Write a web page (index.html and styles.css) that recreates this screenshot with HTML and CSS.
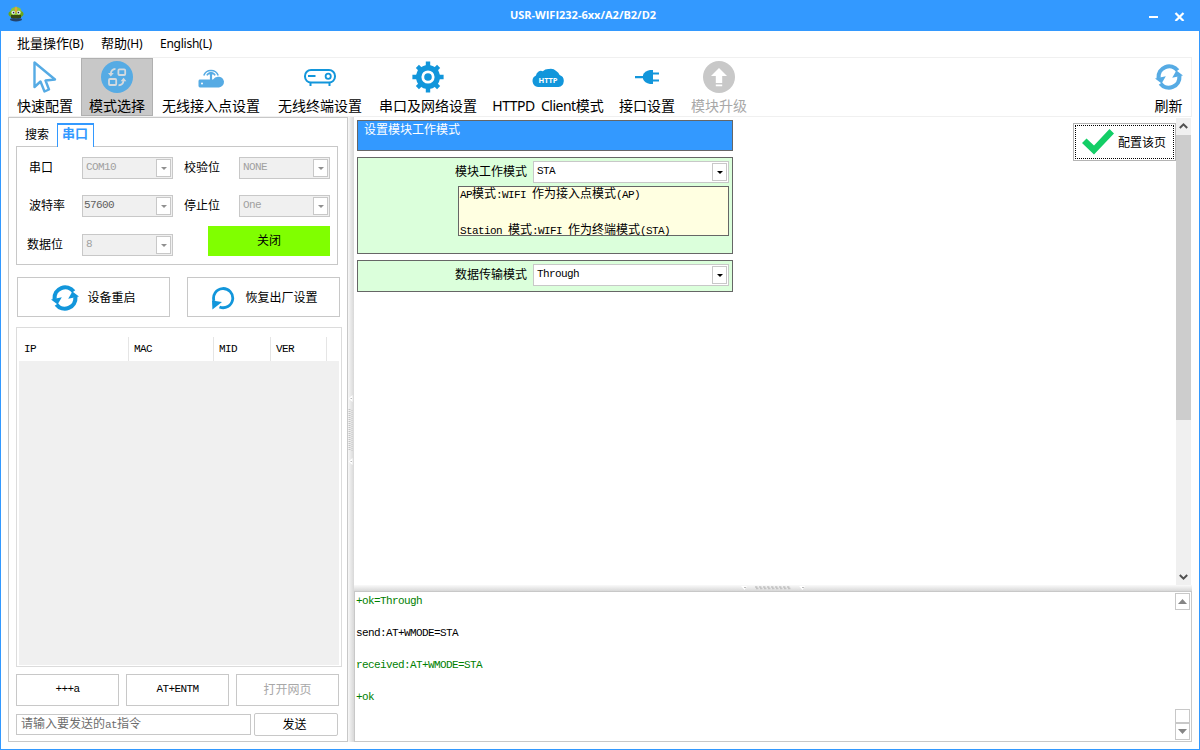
FILE: index.html
```html
<!DOCTYPE html>
<html lang="zh-CN">
  <head>
    <meta charset="UTF-8" />
    <meta name="viewport" content="width=device-width, initial-scale=1.0" />
    <title>USR-WIFI232-6xx/A2/B2/D2</title>
    <link rel="stylesheet" href="styles.css">
  </head>
  <body>
    <svg class="defs" width="0" height="0">
      <symbol id="refresh" viewBox="0 0 28 28">
        <g id="half">
          <path d="M3.6 15A10.6 10.6 0 0 1 22.6 7.6" fill="none" stroke="currentColor" stroke-width="4.2" />
          <path d="M0 15.6L10.8 13.2L6.6 20.6Z" fill="currentColor" />
        </g>
        <use href="#half" transform="rotate(180 14 14)" />
      </symbol>
    </svg>

    <div class="window">
      <div class="titlebar">
        <svg class="app-icon" width="18" height="18" viewBox="0 0 18 18">
          <ellipse cx="9" cy="14.6" rx="6" ry="1.8" fill="#23436d" />
          <ellipse cx="9" cy="9" rx="7.6" ry="4.2" fill="#6aa51c" />
          <ellipse cx="9" cy="6.4" rx="5.4" ry="4.5" fill="#8cc63a" />
          <rect x="4" y="10" width="10" height="3" fill="#354712" />
          <circle cx="6.3" cy="7.6" r="1.8" fill="#dfe9ee" />
          <circle cx="11.7" cy="7.6" r="1.8" fill="#dfe9ee" />
          <circle cx="6.6" cy="7.6" r=".8" fill="#223" />
          <circle cx="11.4" cy="7.6" r=".8" fill="#223" />
          <path d="M7.5 4L9 1L10.5 4L9 9Z" fill="#e9a13b" />
        </svg>
        <span class="title">USR-WIFI232-6xx/A2/B2/D2</span>
        <div class="win-buttons">
          <svg width="36" height="12" viewBox="0 0 36 12">
            <path d="M0 8H9" stroke="#fff" stroke-width="2" />
            <path d="M26.5 4L34.5 12M34.5 4L26.5 12" stroke="#fff" stroke-width="2.2" />
          </svg>
        </div>
      </div>

      <div class="menubar">
        <span class="menu-batch">批量操作<i>(B)</i></span>
        <span class="menu-help">帮助<i>(H)</i></span>
        <span><i>English(L)</i></span>
      </div>

      <div class="toolbar">
        <div class="tool w72 light">
          <svg width="32" height="32" viewBox="0 0 32 32"><path d="M5.5 1.5V26L11.5 20.5L15.5 30.5L20 28.5L16.5 19.5L26 18.5Z" fill="none" stroke="currentColor" stroke-width="2.4" stroke-linejoin="round" /></svg>
          <span>快速配置</span>
        </div>
        <div class="tool w72 light active">
          <svg width="32" height="32" viewBox="0 0 32 32">
            <circle cx="16" cy="16" r="16" fill="currentColor" />
            <g fill="none" stroke="#d5dade" stroke-width="1.8">
              <rect x="17.4" y="8.4" width="6.8" height="5.6" rx="1" />
              <rect x="8" y="18" width="7.2" height="6" rx="1" />
              <path d="M14.5 7.8Q10 8.2 9.8 13M17.5 24.3Q22.4 24 22.6 19" />
            </g>
            <path d="M7 12H12.8L9.8 15.4ZM19.6 20.2H25.4L22.6 16.8Z" fill="#d5dade" />
          </svg>
          <span>模式选择</span>
        </div>
        <div class="tool w116 light">
          <svg width="32" height="32" viewBox="0 0 32 32">
            <path d="M5 18.6H18A6 6 0 0 1 29 20.6A5.6 5.6 0 0 1 24 26.4H5A1.5 1.5 0 0 1 3.5 25V20A1.5 1.5 0 0 1 5 18.6Z" fill="currentColor" />
            <path d="M16 19V13" stroke="currentColor" stroke-width="2.2" />
            <circle cx="16" cy="12.6" r="1.8" fill="currentColor" />
            <path d="M11.9 14.4A4.6 4.6 0 0 1 20.1 14.4M8.8 14.6A7.6 7.4 0 0 1 23.2 14.6" fill="none" stroke="currentColor" stroke-width="1.6" />
            <circle cx="7" cy="22.4" r="1" fill="#fff" />
          </svg>
          <span>无线接入点设置</span>
        </div>
        <div class="tool w102">
          <svg width="32" height="32" viewBox="0 0 32 32">
            <rect x="1" y="9" width="30" height="12.6" rx="6" fill="none" stroke="currentColor" stroke-width="2" />
            <path d="M4 15H11.5M6.5 22V25M25.5 22V25" stroke="currentColor" stroke-width="2" />
            <circle cx="24.2" cy="15.2" r="2.6" fill="none" stroke="currentColor" stroke-width="1.8" />
          </svg>
          <span>无线终端设置</span>
        </div>
        <div class="tool w114">
          <svg width="32" height="32" viewBox="0 0 32 32">
            <g stroke="currentColor" stroke-width="4.4">
              <path d="M16 .4V31.6M.4 16H31.6M5.4 5.4L26.6 26.6M26.6 5.4L5.4 26.6" />
            </g>
            <circle cx="16" cy="16" r="12" fill="currentColor" />
            <circle cx="16" cy="16" r="5.2" fill="currentColor" stroke="#fff" stroke-width="2.8" />
          </svg>
          <span>串口及网络设置</span>
        </div>
        <div class="tool w126">
          <svg width="32" height="32" viewBox="0 0 32 32">
            <path d="M6 26A6 6 0 0 1 4 14.6A5 5 0 0 1 10.8 10.2A8 8 0 0 1 17 8A8 8 0 0 1 24.2 10A7 7 0 0 1 27.6 14A6.2 6.2 0 0 1 26.4 26Z" fill="currentColor" />
            <text class="http" x="16" y="21.8" text-anchor="middle">HTTP</text>
          </svg>
          <span><i>HTTPD&nbsp; Client</i>模式</span>
        </div>
        <div class="tool w72">
          <svg width="32" height="32" viewBox="0 0 32 32">
            <path d="M4 16.2H13M21 12.5H28M21 19.5H28" stroke="currentColor" stroke-width="2.2" />
            <path d="M22 9V23H19Q13.5 22 12 18V14Q13.5 10 19 9Z" fill="currentColor" />
          </svg>
          <span>接口设置</span>
        </div>
        <div class="tool w72 disabled">
          <svg width="32" height="32" viewBox="0 0 32 32">
            <circle cx="16" cy="16" r="16" fill="#c8c8c8" />
            <path d="M16 7L24 15H19.2V22H12.8V15H8ZM12.8 23.4H19.2V25.2H12.8Z" fill="#fff" />
          </svg>
          <span>模块升级</span>
        </div>
        <div class="tool light refresh">
          <svg width="28" height="32"><use href="#refresh" width="28" height="32" /></svg>
          <span>刷新</span>
        </div>
      </div>

      <div class="main">
        <div class="left">
          <div class="tabs">
            <span class="tab">搜索</span>
            <span class="tab selected">串口</span>
          </div>
          <div class="serial">
            <label>串口</label>
            <div class="combo off"><span>COM10</span><b></b></div>
            <label class="second">校验位</label>
            <div class="combo off"><span>NONE</span><b></b></div>
            <label>波特率</label>
            <div class="combo off baud"><span>57600</span><b></b></div>
            <label class="second">停止位</label>
            <div class="combo off"><span>One</span><b></b></div>
            <label class="wide">数据位</label>
            <div class="combo off"><span>8</span><b></b></div>
            <button class="close-port">关闭</button>
          </div>

          <div class="actions">
            <button><svg class="blue" width="28" height="28"><use href="#refresh" /></svg>设备重启</button>
            <button>
              <svg class="blue" width="24" height="24" viewBox="0 0 24 24">
                <path d="M3 15A9.6 9.6 0 1 1 8.5 21" fill="none" stroke="currentColor" stroke-width="2.8" />
                <path d="M1 14.5L11 16L1.4 23.6Z" fill="currentColor" />
              </svg>恢复出厂设置
            </button>
          </div>

          <div class="list">
            <div class="list-head mono">
              <span class="c-ip">IP</span><span class="c-mac">MAC</span><span class="c-mid">MID</span><span class="c-ver">VER</span>
            </div>
            <div class="list-body"></div>
          </div>

          <div class="commands">
            <button class="mono">+++a</button>
            <button class="mono">AT+ENTM</button>
            <button class="disabled">打开网页</button>
          </div>
          <div class="send-row">
            <div class="at-input">请输入要发送的<span class="mono">at</span>指令</div>
            <button>发送</button>
          </div>
        </div>

        <div class="vsplit">
          <svg width="6" height="70" viewBox="0 0 6 70">
            <path d="M4.5 0V7L.5 3.5ZM4.5 63V70L.5 66.5Z" fill="#fff" />
            <path d="M2.5 3.5h1.5M2.5 66.5h1.5" stroke="#bbb" />
            <path d="M1.5 14V56" stroke="#c4c4c4" stroke-width="2" stroke-dasharray="1 1" />
            <path d="M4 15V56" stroke="#c4c4c4" stroke-width="1" stroke-dasharray="1 1" />
          </svg>
        </div>

        <div class="right">
          <div class="page">
            <div class="settings">
              <div class="page-title">设置模块工作模式</div>
              <div class="group mode">
                <div class="row">
                  <label>模块工作模式</label>
                  <div class="combo"><span>STA</span><b></b></div>
                </div>
                <div class="hint mono">
                  <p>AP<em>模式</em>:WIFI <em>作为接入点模式</em>(AP)</p>
                  <p>Station <em>模式</em>:WIFI <em>作为终端模式</em>(STA)</p>
                </div>
              </div>
              <div class="group">
                <div class="row">
                  <label>数据传输模式</label>
                  <div class="combo"><span>Through</span><b></b></div>
                </div>
              </div>
            </div>
            <button class="apply">
              <span class="focus">
                <svg width="32" height="26" viewBox="0 0 32 26"><path d="M0 14L4.5 9.5L12 16.5L27.5 0L32 4.5L12 25.5Z" fill="#13ce66" /></svg>
                配置该页
              </span>
            </button>
            <div class="scroll">
              <svg width="15" height="17" viewBox="0 0 15 17"><path d="M3.8 10L7.5 6.3L11.2 10" fill="none" stroke="#505050" stroke-width="2" /></svg>
              <div class="thumb"></div>
              <svg width="15" height="17" viewBox="0 0 15 17"><path d="M3.8 7L7.5 10.7L11.2 7" fill="none" stroke="#505050" stroke-width="2" /></svg>
            </div>
          </div>

          <div class="hsplit">
            <svg width="66" height="6" viewBox="0 0 66 6">
              <path d="M1 1H7L4.5 5ZM59 1H65L62.5 5Z" fill="#fff" />
              <path d="M4 2.5h2M62 2.5h2" stroke="#bbb" />
              <path d="M15 2H50M16 3.5H51" stroke="#c4c4c4" stroke-width="1.5" stroke-dasharray="2.4 1.6" />
            </svg>
          </div>

          <div class="log">
            <div class="log-text mono">
              <p class="ok">+ok=Through</p>
              <p>send:AT+WMODE=STA</p>
              <p class="ok">received:AT+WMODE=STA</p>
              <p class="ok">+ok</p>
            </div>
            <div class="log-scroll">
              <span class="arrow"><svg width="9" height="5"><path d="M0 5L4.5 0L9 5Z" fill="#858585" /></svg></span>
              <span class="grip"></span>
              <span class="arrow"><svg width="9" height="5"><path d="M0 0L4.5 5L9 0Z" fill="#858585" /></svg></span>
            </div>
          </div>
        </div>
      </div>
    </div>
  </body>
</html>
```
FILE: styles.css
```css
:root {
  --blue: #3399ff;
  --icon: #1296db;
  --icon-light: #56abe4;
  --line: #c8c8c8;
}

* {
  margin: 0;
  padding: 0;
  box-sizing: border-box;
}

body {
  width: 1200px;
  height: 750px;
  overflow: hidden;
  background: #fff;
  color: #000;
  font: 12px/16px "Noto Sans CJK SC", sans-serif;
}

.defs {
  position: absolute;
}

svg {
  display: block;
  flex: none;
}

i {
  font-family: "Noto Sans", sans-serif;
  font-style: normal;
}

button {
  display: flex;
  align-items: center;
  justify-content: center;
  padding-bottom: 2px;
  background: #fff;
  border: 1px solid var(--line);
  color: #000;
  font: inherit;
}

/* fixed 6px pitch for latin text */
.mono,
.combo span {
  font-family: "Liberation Mono", monospace;
  font-size: 11px;
  letter-spacing: -0.6px;
}

.mono em {
  font: 12px/1 "Noto Sans CJK SC", sans-serif;
  letter-spacing: 0;
}

.window {
  width: 1200px;
  height: 750px;
  display: flex;
  flex-direction: column;
  border: 1px solid var(--blue);
  border-top: 0;
}

.titlebar {
  display: flex;
  height: 31px;
  flex: none;
  background: var(--blue);
  color: #fff;
}

.app-icon {
  margin: 5px 0 0 6px;
}

.title {
  flex: 1;
  padding: 6px 8px 0 0;
  text-align: center;
  font: bold 11px/17px "Open Sans", sans-serif;
}

.win-buttons {
  width: 50px;
  padding: 9px 0 0;
}

.menubar {
  display: flex;
  height: 26px;
  flex: none;
  padding: 4px 0 0 16px;
  font-size: 13px;
}

.menubar i {
  font-size: 12px;
  letter-spacing: -0.25px;
}

.menu-batch {
  width: 84px;
}

.menu-help {
  width: 59px;
}

.toolbar {
  display: flex;
  height: 60px;
  flex: none;
  margin: 0 7px;
  border: 1px solid #f0f0f0;
  color: var(--icon);
}

.tool {
  display: flex;
  flex-direction: column;
  align-items: center;
  padding-top: 3px;
}

.tool span {
  margin-top: 4px;
  color: #000;
  font-size: 14px;
  line-height: 16px;
  white-space: nowrap;
}

.tool i {
  letter-spacing: -0.5px;
}

.tool.light {
  color: var(--icon-light);
}

.tool.active {
  background: #c8c8c8;
  box-shadow: inset 0 0 0 1px #b0b0b0;
}

.tool.disabled span,
button.disabled {
  color: #a8a8a8;
}

.w72 { width: 72px; }
.w102 { width: 102px; }
.w114 { width: 114px; }
.w116 { width: 116px; }
.w126 { width: 126px; }

.refresh {
  width: 45px;
  margin-left: auto;
}

.http {
  fill: #fff;
  font: bold 7.5px "Open Sans", sans-serif;
}

.main {
  display: flex;
  height: 625px;
  margin: 0 7px;
}

/* left panel */
.left {
  width: 340px;
  padding: 5px 5px 0 7px;
  border: 1px solid var(--line);
}

.tabs {
  display: flex;
  height: 24px;
  padding-left: 9px;
}

.tab {
  width: 32px;
  padding-top: 3px;
}

.tab.selected {
  position: relative;
  width: 37px;
  border: 1px solid var(--blue);
  border-top-width: 2px;
  border-bottom: 0;
  background: #fff;
  color: var(--blue);
  font-size: 13px;
  font-weight: bold;
  padding: 0 0 0 4px;
}

.serial {
  display: grid;
  grid-template-columns: 55px 91px 66px 91px;
  grid-template-rows: 22px 22px 30px;
  row-gap: 16px;
  width: 322px;
  height: 119px;
  margin-top: -1px;
  padding: 10px 0 0 10px;
  border: 1px solid var(--line);
}

.serial label {
  padding: 2px 0 0 2px;
}

.serial .second {
  padding-left: 11px;
}

.serial .wide {
  padding: 2px 0 0;
}

.serial .wide,
.serial .wide + .combo {
  margin-top: 1px;
}

.combo {
  display: flex;
  justify-content: space-between;
  width: 91px;
  height: 22px;
  padding: 1px;
  border: 1px solid var(--line);
  background: #fff;
}

.combo span {
  padding-left: 2px;
  line-height: 16px;
}

.combo b {
  display: flex;
  align-items: center;
  justify-content: center;
  width: 15px;
  height: 18px;
  border: 1px solid var(--line);
  background: #fff;
}

.combo b::after {
  content: "";
  border: 3px solid transparent;
  border-top-color: #000;
  border-bottom: 0;
}

.combo.off {
  background: #f0f0f0;
  color: #a0a0a0;
}

.combo.baud {
  color: #606060;
}

.combo.baud span {
  padding-left: 0;
}

.combo.off b::after {
  border-top-color: #909090;
}

.close-port {
  grid-column: 3 / 5;
  justify-self: end;
  width: 122px;
  height: 30px;
  margin-top: -7px;
  border: 0;
  background: #80ff00;
}

.actions {
  display: flex;
  gap: 17px;
  margin: 12px 0 0 1px;
}

.actions button {
  width: 153px;
  height: 40px;
  padding-bottom: 1px;
}

.actions svg {
  margin-right: 8px;
  position: relative;
  top: 1px;
}

.actions button + button {
  padding-left: 2px;
}

.actions button + button svg {
  margin-right: 10px;
}

.blue {
  color: var(--icon);
}

.list {
  display: flex;
  flex-direction: column;
  width: 326px;
  height: 340px;
  margin-top: 10px;
  padding: 9px 2px 1px;
  border: 1px solid #dcdcdc;
}

.list-head {
  display: flex;
  height: 24px;
}

.list-head span {
  padding: 4px 0 0 5px;
  border-right: 1px solid #e5e5e5;
}

.list-head .c-ip { width: 110px; }
.list-head .c-mac { width: 85px; }
.list-head .c-mid { width: 57px; }
.list-head .c-ver { width: 56px; }

.list-body {
  flex: 1;
  background: #f0f0f0;
}

.commands {
  display: flex;
  gap: 7px;
  margin-top: 7px;
}

.commands button {
  width: 103px;
  height: 32px;
}

.commands .mono {
  font-family: "Liberation Mono", monospace;
  font-size: 11px;
}

.send-row {
  display: flex;
  align-items: center;
  gap: 3px;
  margin-top: 7px;
}

.at-input {
  width: 235px;
  height: 21px;
  padding-left: 4px;
  border: 1px solid var(--line);
  color: #6d6d6d;
}

.at-input .mono {
  line-height: 1;
}

.send-row button {
  width: 84px;
  height: 23px;
  padding-right: 3px;
  border-radius: 2px;
}

/* splitters */
.vsplit {
  display: flex;
  align-items: center;
  width: 6px;
  background: linear-gradient(90deg, #f7f7f7, #d8d8d8);
}

.hsplit {
  display: flex;
  justify-content: center;
  align-items: center;
  height: 6px;
  background: linear-gradient(#fafafa, #d8d8d8);
}

/* right side */
.right {
  display: flex;
  flex-direction: column;
  width: 838px;
}

.page {
  display: flex;
  height: 468px;
}

.settings {
  width: 719px;
  padding: 3px 0 0 3px;
}

.page-title {
  width: 376px;
  height: 31px;
  padding: 0 6px;
  border: 1px solid #666;
  background: var(--blue);
  color: #fff;
}

.group {
  width: 376px;
  margin-top: 6px;
  padding: 3px 3px 5px;
  border: 1px solid #666;
  background: #dbffdb;
}

.group.mode {
  height: 97px;
}

.row {
  display: flex;
  justify-content: flex-end;
  gap: 6px;
}

.row label {
  padding-top: 2px;
}

.row .combo {
  width: 196px;
}

.hint {
  width: 271px;
  height: 50px;
  margin: 3px 0 0 97px;
  border: 1px solid #666;
  background: #ffffe1;
  white-space: nowrap;
}

.hint p {
  height: 36px;
  padding-left: 1px;
  line-height: 13px;
}

.apply {
  width: 103px;
  height: 38px;
  margin-top: 6px;
  padding: 1px;
  border-color: #b4b4b4;
}

.focus {
  display: flex;
  align-items: center;
  gap: 4px;
  width: 100%;
  height: 100%;
  padding: 0 0 1px 6px;
  border: 1px dotted #000;
  white-space: nowrap;
}

.scroll {
  display: flex;
  flex-direction: column;
  width: 15px;
  margin-top: 1px;
  background: #f0f0f0;
}

.thumb {
  height: 285px;
  margin-bottom: auto;
  background: #cdcdcd;
}

.log {
  display: flex;
  justify-content: space-between;
  height: 151px;
  padding: 1px 1px 1px 0;
  border: 1px solid var(--line);
}

.log p {
  height: 32px;
}

.log-text {
  padding-left: 1px;
}

.log .ok {
  color: #008000;
}

.log-scroll {
  display: flex;
  flex-direction: column;
  width: 15px;
}

.log-scroll span {
  display: flex;
  align-items: center;
  justify-content: center;
  height: 17px;
  border: 1px solid var(--line);
}

.log-scroll .grip {
  height: 14px;
  margin-top: auto;
}
```
